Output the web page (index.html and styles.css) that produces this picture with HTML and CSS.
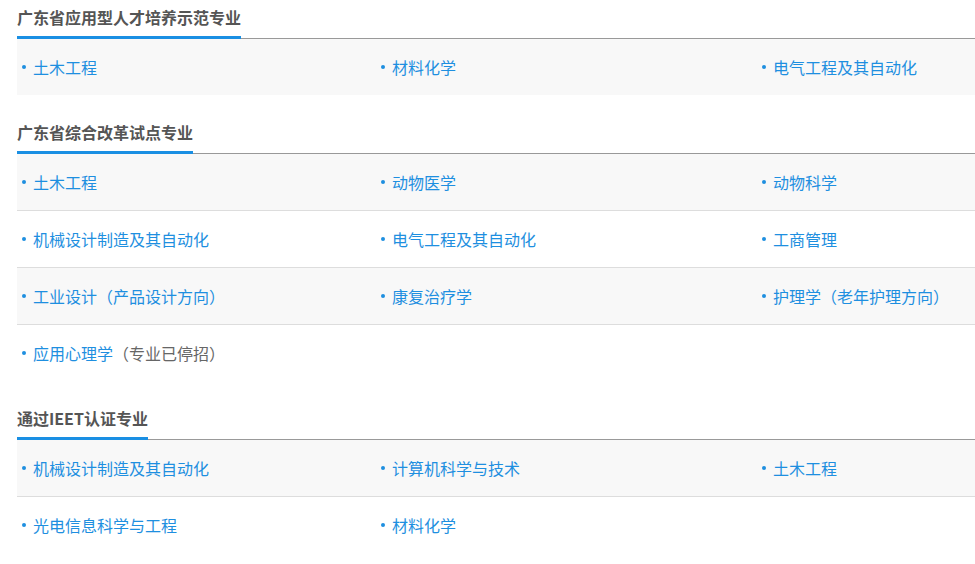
FILE: index.html
```html
<!DOCTYPE html>
<html lang="zh">
<head>
<meta charset="utf-8">
<link rel="stylesheet" href="styles.css">
</head>
<body>
<div class="page">
  <section class="sec">
    <h2 class="sec-title"><span>广东省应用型人才培养示范专业</span></h2>
    <ul class="grid">
      <li class="row">
        <span class="item">土木工程</span>
        <span class="item">材料化学</span>
        <span class="item">电气工程及其自动化</span>
      </li>
    </ul>
  </section>
  <section class="sec">
    <h2 class="sec-title"><span>广东省综合改革试点专业</span></h2>
    <ul class="grid">
      <li class="row">
        <span class="item">土木工程</span>
        <span class="item">动物医学</span>
        <span class="item">动物科学</span>
      </li>
      <li class="row">
        <span class="item">机械设计制造及其自动化</span>
        <span class="item">电气工程及其自动化</span>
        <span class="item">工商管理</span>
      </li>
      <li class="row">
        <span class="item">工业设计（产品设计方向）</span>
        <span class="item">康复治疗学</span>
        <span class="item">护理学（老年护理方向）</span>
      </li>
      <li class="row">
        <span class="item">应用心理学<em class="note">（专业已停招）</em></span>
      </li>
    </ul>
  </section>
  <section class="sec">
    <h2 class="sec-title"><span>通过IEET认证专业</span></h2>
    <ul class="grid">
      <li class="row">
        <span class="item">机械设计制造及其自动化</span>
        <span class="item">计算机科学与技术</span>
        <span class="item">土木工程</span>
      </li>
      <li class="row">
        <span class="item">光电信息科学与工程</span>
        <span class="item">材料化学</span>
      </li>
    </ul>
  </section>
</div>
</body>
</html>
```
FILE: styles.css
```css
html, body {
  margin: 0;
  padding: 0;
  background: #fff;
}
body {
  font-family: "Microsoft YaHei", "Noto Sans CJK SC", "Noto Sans", sans-serif;
}
.page {
  padding-left: 17px;
}
.sec {
  margin-bottom: 20px;
}
.sec-title {
  margin: 0;
  font-size: 16px;
  font-weight: bold;
  color: #555;
  height: 38px;
  border-bottom: 1px solid #999;
  display: flex;
  align-items: flex-end;
}
.sec-title span {
  display: block;
  line-height: 33px;
  padding-bottom: 2px;
  border-bottom: 3px solid #1a8fe3;
  margin-bottom: -1px;
}
.grid {
  list-style: none;
  margin: 0;
  padding: 0;
}
.row {
  display: grid;
  grid-template-columns: 359px 381px 1fr;
  height: 56px;
  align-items: center;
  border-bottom: 1px solid #ddd;
}
.row:last-child {
  border-bottom: none;
}
.row:nth-child(odd) {
  background: #f8f8f8;
}
.item {
  display: flex;
  align-items: center;
  padding-left: 5px;
  font-size: 16px;
  line-height: 20px;
  color: #1e8fe0;
  white-space: nowrap;
  margin-top: -1px;
}
.item::before {
  content: "";
  width: 4px;
  height: 4px;
  border-radius: 50%;
  background: #1e8fe0;
  margin-right: 7px;
  flex: none;
}
.note {
  font-style: normal;
  color: #666;
}
```
